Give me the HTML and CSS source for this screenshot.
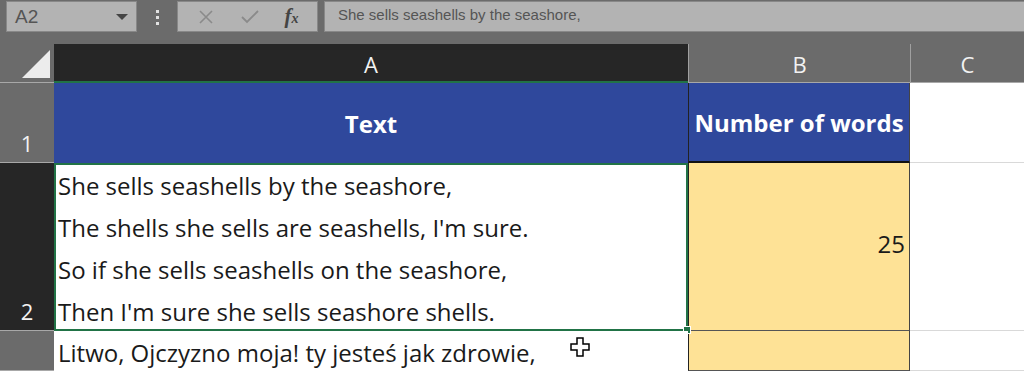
FILE: index.html
```html
<!DOCTYPE html>
<html lang="en">

<head>
    <meta charset="UTF-8">
    <meta name="viewport" content="width=device-width, initial-scale=1.0">
    <title>Number of words</title>
    <link rel="stylesheet" href="styles.css">
</head>

<body>
    <!-- Formula bar -->
    <div class="toolbar">
        <div class="name-box">
            <span>A2</span>
            <span class="caret"></span>
        </div>
        <div class="grip">
            <span></span><span></span><span></span>
        </div>
        <div class="fx-buttons">
            <svg class="icon" width="18" height="18" viewBox="0 0 18 18">
                <path d="M3 3 L15 15 M15 3 L3 15" stroke="#8a8a8a" stroke-width="1.6" fill="none" />
            </svg>
            <svg class="icon" width="20" height="18" viewBox="0 0 20 18">
                <path d="M2 9 L7 14 L18 3" stroke="#8a8a8a" stroke-width="1.8" fill="none" />
            </svg>
            <span class="fx">f<small>x</small></span>
        </div>
        <div class="formula">She sells seashells by the seashore,</div>
    </div>

    <!-- Sheet -->
    <div class="sheet">
        <div class="corner"><span class="triangle"></span></div>
        <div class="col-head selected">A</div>
        <div class="col-head">B</div>
        <div class="col-head">C</div>

        <div class="row-head">1</div>
        <div class="cell head-cell">Text</div>
        <div class="cell head-cell col-b">Number of words</div>
        <div class="cell blank"></div>

        <div class="row-head selected">2</div>
        <div class="cell text-cell active">
            She sells seashells by the seashore,<br>
            The shells she sells are seashells, I'm sure.<br>
            So if she sells seashells on the seashore,<br>
            Then I'm sure she sells seashore shells.
            <span class="fill-handle"></span>
        </div>
        <div class="cell count-cell col-b">25</div>
        <div class="cell blank"></div>

        <div class="row-head"></div>
        <div class="cell text-cell">
            Litwo, Ojczyzno moja! ty jesteś jak zdrowie,
            <svg class="cursor" width="20" height="20" viewBox="0 0 20 20">
                <path d="M7 1 H13 V7 H19 V13 H13 V19 H7 V13 H1 V7 H7 Z" fill="#fff" stroke="#000" stroke-width="1.5" />
            </svg>
        </div>
        <div class="cell count-cell col-b"></div>
        <div class="cell blank"></div>
    </div>
</body>

</html>
```

FILE: styles.css
```css
* {
    box-sizing: border-box;
}

body {
    margin: 0;
    width: 1024px;
    height: 371px;
    overflow: hidden;
    background-color: #6b6b6b;
    font-family: "Open Sans", "Noto Sans", sans-serif;
}

/* Toolbar */
.toolbar {
    display: flex;
    align-items: flex-start;
    height: 44px;
    padding: 1px 0 0 6px;
    background-color: #6b6b6b;
}

.name-box {
    display: flex;
    align-items: center;
    justify-content: space-between;
    width: 131px;
    height: 31px;
    padding: 0 8px 0 8px;
    background-color: #b3b3b3;
    border: 1px solid #888;
    color: #555;
    font-family: "Liberation Sans", sans-serif;
    font-size: 19px;
}

.caret {
    width: 0;
    height: 0;
    border-left: 6px solid transparent;
    border-right: 6px solid transparent;
    border-top: 6px solid #444;
}

.grip {
    display: flex;
    flex-direction: column;
    align-items: center;
    gap: 3px;
    width: 40px;
    padding-top: 9px;
}

.grip span {
    width: 3px;
    height: 3px;
    background-color: #e2e2e2;
}

.fx-buttons {
    display: flex;
    align-items: center;
    justify-content: space-around;
    width: 141px;
    height: 31px;
    padding: 0 6px;
    background-color: #b3b3b3;
    border: 1px solid #888;
}

.fx {
    font-family: "Liberation Serif", serif;
    font-style: italic;
    font-weight: bold;
    font-size: 21px;
    color: #444;
}

.fx small {
    font-size: 14px;
}

.formula {
    flex: 1;
    height: 31px;
    margin-left: 6px;
    padding: 4px 0 0 13px;
    background-color: #b3b3b3;
    border: 1px solid #888;
    border-right: none;
    color: #555;
    font-family: "Liberation Sans", sans-serif;
    font-size: 15px;
}

/* Sheet grid */
.sheet {
    display: grid;
    grid-template-columns: 54px 634px 222px 114px;
    grid-template-rows: 39px 80px 168px 40px;
}

.corner {
    position: relative;
    border-bottom: 1px solid #a8a8a8;
}

.triangle {
    position: absolute;
    right: 4px;
    bottom: 4px;
    width: 0;
    height: 0;
    border-left: 28px solid transparent;
    border-bottom: 28px solid #ececec;
}

.col-head {
    display: flex;
    align-items: center;
    justify-content: center;
    padding-top: 2px;
    background-color: #6b6b6b;
    border-left: 1px solid #a0a0a0;
    border-bottom: 1px solid #a8a8a8;
    color: #f2f2f2;
    font-size: 22px;
}

.col-head.selected {
    background-color: #262626;
    border-left: none;
    border-bottom: 2px solid #217346;
}

.row-head {
    display: flex;
    align-items: flex-end;
    justify-content: center;
    padding-bottom: 4px;
    background-color: #6b6b6b;
    border-bottom: 1px solid #a8a8a8;
    color: #f2f2f2;
    font-size: 22px;
}

.row-head.selected {
    background-color: #262626;
}

/* Cells */
.cell {
    background-color: #fff;
    color: #1a1a1a;
    font-family: "Open Sans", sans-serif;
    font-size: 24px;
}

.head-cell {
    display: flex;
    align-items: center;
    justify-content: center;
    background-color: #2f489c;
    color: #fff;
    font-size: 24px;
    font-weight: bold;
}

.col-b {
    border-left: 1px solid #222;
    border-right: 1px solid #444;
}

.head-cell.col-b {
    border-bottom: 2px solid #111;
}

.text-cell {
    position: relative;
    padding: 1px 0 0 4px;
    line-height: 42px;
    white-space: nowrap;
}

.text-cell.active {
    border: 2px solid #217346;
    padding: 0 0 0 2px;
}

.fill-handle {
    position: absolute;
    right: -5px;
    bottom: -5px;
    width: 8px;
    height: 8px;
    background-color: #217346;
    border: 1px solid #fff;
}

.count-cell {
    display: flex;
    align-items: center;
    justify-content: flex-end;
    padding: 0 4px 6px 0;
    background-color: #fee296;
    border-bottom: 1px solid #555;
}

.blank {
    border-bottom: 1px solid #d9d9d9;
}

.cursor {
    position: absolute;
    left: 516px;
    top: 6px;
}
```
